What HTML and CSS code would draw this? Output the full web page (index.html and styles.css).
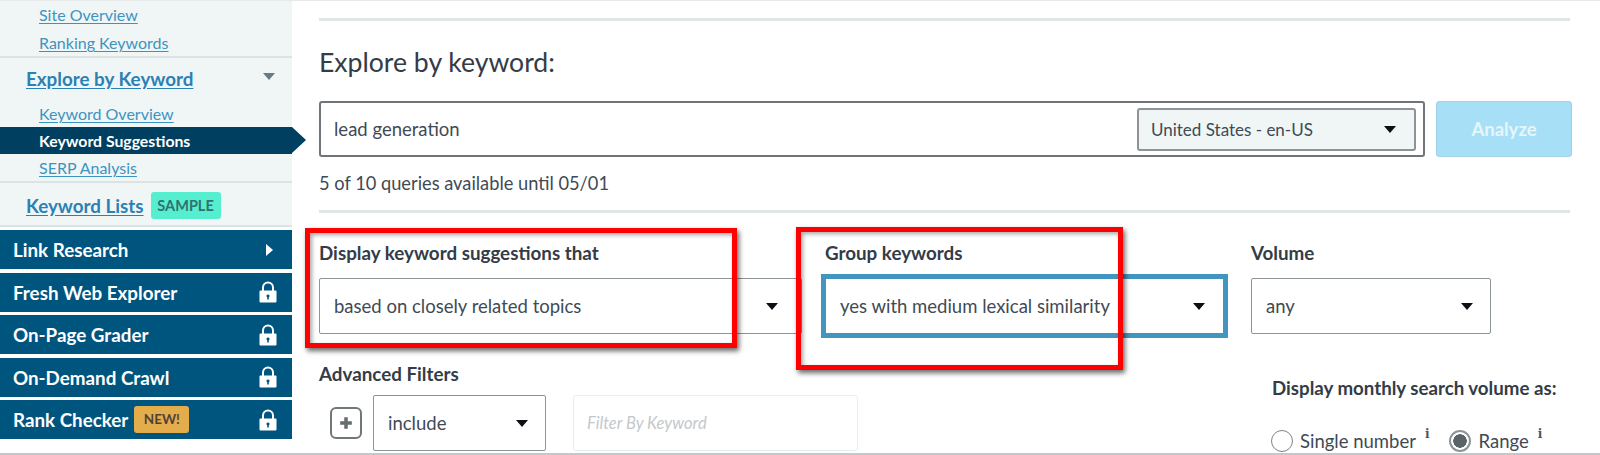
FILE: index.html
```html
<!DOCTYPE html>
<html lang="en">
<head>
<meta charset="utf-8">
<title>Explore by keyword</title>
<link rel="stylesheet" href="styles.css">
</head>
<body>
<div class="page">
  <aside class="sidebar">
    <div class="nav-panel">
      <section class="nav-group first">
        <a class="sub-link" href="#">Site Overview</a>
        <a class="sub-link" href="#">Ranking Keywords</a>
      </section>
      <section class="nav-group second">
        <div class="group-head">
          <a class="group-link" href="#">Explore by Keyword</a>
          <span class="caret-gray"></span>
        </div>
        <a class="sub-link overview" href="#">Keyword Overview</a>
        <div class="active-row">Keyword Suggestions</div>
        <a class="sub-link serp" href="#">SERP Analysis</a>
      </section>
      <section class="nav-group third">
        <a class="group-link" href="#">Keyword Lists</a>
        <span class="badge-sample">SAMPLE</span>
      </section>
    </div>
    <nav class="tool-list">
      <div class="tool"><span>Link Research</span><span class="caret-white"></span></div>
      <div class="tool"><span>Fresh Web Explorer</span><svg class="lock" viewBox="0 0 18 22"><path d="M4 10V6.500a5 5 0 0 1 10 0V10" fill="none" stroke="#fff" stroke-width="2"/><path fill-rule="evenodd" d="M1.500 9.500h15a1 1 0 0 1 1 1v10a1 1 0 0 1-1 1h-15a1 1 0 0 1-1-1v-10a1 1 0 0 1 1-1zM9 13.500a1.500 1.500 0 0 0-.8 2.800V18.500h1.600v-2.200A1.500 1.500 0 0 0 9 13.500z" fill="#fff"/></svg></div>
      <div class="tool"><span>On-Page Grader</span><svg class="lock" viewBox="0 0 18 22"><path d="M4 10V6.500a5 5 0 0 1 10 0V10" fill="none" stroke="#fff" stroke-width="2"/><path fill-rule="evenodd" d="M1.500 9.500h15a1 1 0 0 1 1 1v10a1 1 0 0 1-1 1h-15a1 1 0 0 1-1-1v-10a1 1 0 0 1 1-1zM9 13.500a1.500 1.500 0 0 0-.8 2.800V18.500h1.600v-2.200A1.500 1.500 0 0 0 9 13.500z" fill="#fff"/></svg></div>
      <div class="tool"><span>On-Demand Crawl</span><svg class="lock" viewBox="0 0 18 22"><path d="M4 10V6.500a5 5 0 0 1 10 0V10" fill="none" stroke="#fff" stroke-width="2"/><path fill-rule="evenodd" d="M1.500 9.500h15a1 1 0 0 1 1 1v10a1 1 0 0 1-1 1h-15a1 1 0 0 1-1-1v-10a1 1 0 0 1 1-1zM9 13.500a1.500 1.500 0 0 0-.8 2.800V18.500h1.600v-2.200A1.500 1.500 0 0 0 9 13.500z" fill="#fff"/></svg></div>
      <div class="tool"><span class="tool-name">Rank Checker<span class="badge-new">NEW!</span></span><svg class="lock" viewBox="0 0 18 22"><path d="M4 10V6.500a5 5 0 0 1 10 0V10" fill="none" stroke="#fff" stroke-width="2"/><path fill-rule="evenodd" d="M1.500 9.500h15a1 1 0 0 1 1 1v10a1 1 0 0 1-1 1h-15a1 1 0 0 1-1-1v-10a1 1 0 0 1 1-1zM9 13.500a1.500 1.500 0 0 0-.8 2.800V18.500h1.600v-2.200A1.500 1.500 0 0 0 9 13.500z" fill="#fff"/></svg></div>
    </nav>
  </aside>

  <main class="content">
    <hr class="rule">
    <h1 class="title">Explore by keyword:</h1>
    <div class="search-row">
      <div class="search-box">
        <span class="search-text">lead generation</span>
        <div class="locale"><span>United States - en-US</span><span class="caret"></span></div>
      </div>
      <button class="analyze" type="button">Analyze</button>
    </div>
    <p class="quota">5 of 10 queries available until 05/01</p>
    <hr class="rule rule-two">
    <div class="fields">
      <div class="field field-display">
        <label class="label">Display keyword suggestions that</label>
        <div class="select"><span>based on closely related topics</span><span class="caret"></span></div>
      </div>
      <div class="field field-group">
        <label class="label">Group keywords</label>
        <div class="select focused"><span>yes with medium lexical similarity</span><span class="caret"></span></div>
      </div>
      <div class="field field-volume">
        <label class="label">Volume</label>
        <div class="select"><span>any</span><span class="caret"></span></div>
      </div>
    </div>
    <div class="lower">
      <div class="filters">
        <div class="label">Advanced Filters</div>
        <div class="filter-row">
          <button class="plus" type="button" aria-label="Add filter"><svg viewBox="0 0 12 12"><path d="M6 1v10M1 6h10" stroke="#666d70" stroke-width="3"/></svg></button>
          <div class="select include"><span>include</span><span class="caret"></span></div>
          <div class="filter-input">Filter By Keyword</div>
        </div>
      </div>
      <div class="display-as">
        <div class="label">Display monthly search volume as:</div>
        <div class="radios">
          <span class="radio"></span><span>Single number</span><sup class="info">i</sup>
          <span class="radio checked"></span><span>Range</span><sup class="info">i</sup>
        </div>
      </div>
    </div>
  </main>
</div>
<div class="callout callout-one"></div>
<div class="callout callout-two"></div>
</body>
</html>
```
FILE: styles.css
```css
* { box-sizing: border-box; }
html, body { margin: 0; height: 455px; overflow: hidden; background: #fff; }
body { font-family: Lato, "Open Sans", sans-serif; color: #3f4a55; position: relative; border-bottom: 2px solid #c4c8c8; }
.page { display: flex; height: 453px; overflow: hidden; border-top: 1px solid #e6eaea; }

.sidebar { width: 292px; flex: none; background: #fff; }
.nav-panel { background: #f0f6f6; position: relative; }
.nav-group { border-bottom: 2px solid #dde3e3; }
.first { height: 57px; padding: 4px 0 0 39px; display: flex; flex-direction: column; gap: 9px; align-items: flex-start; }
.second { height: 125px; padding-top: 9px; }
.third { height: 44px; padding: 3px 0 0 26px; display: flex; align-items: center; gap: 7px; }
.sub-link { color: #3d93c0; font-size: 16px; line-height: 19px; display: block; text-decoration: underline; text-underline-offset: 2px; }
.overview { margin: 13px 0 4px 39px; width: max-content; }
.serp { margin: 4px 0 0 39px; width: max-content; }
.group-link { color: #2b81b4; font-size: 18.800px; font-weight: 700; line-height: 24px; text-decoration: underline; text-underline-offset: 2px; }
.group-head { display: flex; justify-content: space-between; align-items: flex-start; padding: 0 17px 0 26px; }
.caret-gray { width: 0; height: 0; margin-top: 6px; border-left: 6.500px solid transparent; border-right: 6.500px solid transparent; border-top: 7px solid #6b7a80; }
.active-row { position: relative; height: 27px; padding-left: 39px; background: #003f5f; color: #fff; font-size: 15.800px; font-weight: 700; line-height: 27px; }
.active-row::after { content: ""; position: absolute; left: 100%; top: 0; border-left: 14px solid #003f5f; border-top: 13.500px solid transparent; border-bottom: 13.500px solid transparent; }
.badge-sample { background: #55efcf; color: #33706f; font-size: 14.500px; font-weight: 700; line-height: 27px; height: 27px; width: 70px; text-align: center; border-radius: 3px; }

.tool-list { display: flex; flex-direction: column; gap: 3.500px; padding-top: 3px; }
.tool { height: 39px; background: #00557f; color: #fff; font-size: 18.800px; font-weight: 700; display: flex; align-items: center; justify-content: space-between; padding: 0 15px 0 13px; }
.tool-name { display: flex; align-items: center; gap: 6px; }
.badge-new { background: #e4ad4b; color: #50403a; font-size: 13.500px; font-weight: 700; line-height: 27px; height: 27px; width: 55px; text-align: center; border-radius: 3px; }
.caret-white { width: 0; height: 0; margin-right: 4px; border-top: 6.500px solid transparent; border-bottom: 6.500px solid transparent; border-left: 7px solid #fff; }
.lock { width: 18px; height: 22px; display: block; }

.content { flex: 1; padding: 17px 28px 0 27px; min-width: 0; }
.rule { border: 0; height: 3px; background: #dfe6e6; margin: 0 2px 0 0; }
.title { margin: 25px 0 0; font-size: 26.600px; font-weight: 400; line-height: 32px; color: #333c47; }
.search-row { display: flex; margin-top: 23px; gap: 11px; }
.search-box { width: 1106px; height: 56px; border: 2px solid #6f7579; border-radius: 3px; display: flex; align-items: center; justify-content: space-between; padding: 0 7px 0 13px; }
.search-text { font-size: 18.500px; margin-top: -1px; }
.locale { width: 279px; height: 43px; border: 2px solid #8d9397; border-radius: 3px; background: #f0f6f6; display: flex; align-items: center; justify-content: space-between; padding: 0 18px 0 12px; font-size: 17px; }
.analyze { width: 136px; height: 56px; border: 1px solid #9fd3ec; border-radius: 3px; background: #a6dff6; color: #e6f6fd; font: 700 18.500px Lato, sans-serif; padding: 0; }
.quota { margin: 14px 0 0; font-size: 18.250px; line-height: 24px; }
.rule-two { margin-top: 15px; }

.fields { display: flex; margin-top: 27px; }
.label { font-size: 18.800px; font-weight: 700; line-height: 26px; color: #333c47; }
.field-display { width: 483px; margin-right: 19px; }
.field-display .select { padding-right: 23px; }
.field-group { width: 407px; margin-right: 23px; }
.field-group .label { padding-left: 4px; }
.field-volume { width: 240px; }
.select { height: 56px; margin-top: 12px; border: 1px solid #8d9599; border-radius: 2px; display: flex; align-items: center; justify-content: space-between; padding: 0 17px 0 14px; font-size: 18.500px; background: #fff; }
.field-group .focused { height: 64px; margin-top: 8px; border: 5px solid #4295bf; border-radius: 0; padding: 0 18px 0 14px; }
.caret { width: 0; height: 0; border-left: 6.500px solid transparent; border-right: 6.500px solid transparent; border-top: 7.500px solid #0c0f14; flex: none; }

.lower { display: flex; justify-content: space-between; margin-top: 23px; }
.filter-row { display: flex; align-items: center; margin: 8px 0 0 11px; }
.plus { width: 32px; height: 32px; border: 2px solid #70777b; border-radius: 6px; background: #fff; padding: 7px; display: flex; margin-right: 11px; }
.plus svg { width: 14px; height: 14px; }
.include { width: 173px; height: 56px; margin-top: 0; }
.filter-input { width: 285px; height: 56px; margin-left: 27px; border: 1px solid #e7eeee; border-radius: 3px; padding: 0 13px; font-size: 16.500px; font-style: italic; line-height: 54px; color: #c4c8cb; }
.display-as { width: 300px; margin-top: 14px; }
.display-as .label { font-size: 18.700px; white-space: nowrap; }
.radios { display: flex; align-items: center; margin: 28px 0 0 -1px; font-size: 18.500px; line-height: 24px; }
.radio { width: 22px; height: 22px; border: 1px solid #7e8488; border-radius: 50%; margin-right: 7px; background: #fff; flex: none; }
.checked { margin-left: 20px; border: 2px solid #8d9396; background: radial-gradient(circle, #5a6468 0 6.500px, #fff 7px); }
.info { font: 700 12px "DejaVu Serif", serif; margin: -14px 0 0 9px; color: #4d565c; }

.callout { position: absolute; border: 5px solid #f00; box-shadow: 2px 3px 5px rgba(0,0,0,.6), inset 2px 2px 4px rgba(0,0,0,.35); pointer-events: none; }
.callout-one { left: 305px; top: 228px; width: 432px; height: 120px; }
.callout-two { left: 796px; top: 227px; width: 327px; height: 143px; }
```
